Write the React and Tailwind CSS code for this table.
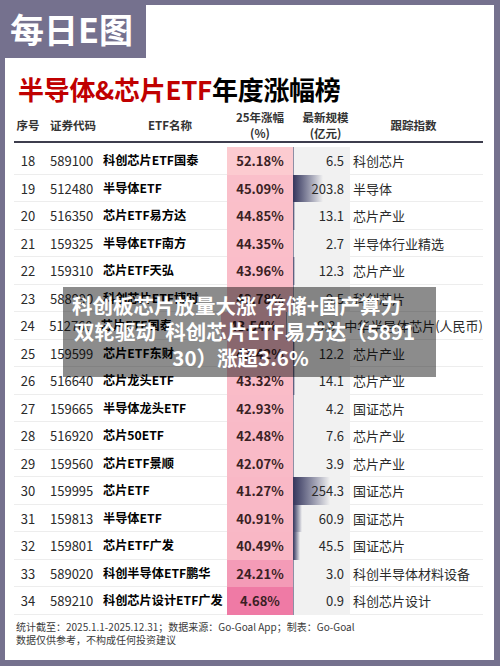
import React from "react";

const rows = [
  ["18", "589100", "科创芯片ETF国泰", 52.18, 6.5, "科创芯片"],
  ["19", "512480", "半导体ETF", 45.09, 203.8, "半导体"],
  ["20", "516350", "芯片ETF易方达", 44.85, 13.1, "芯片产业"],
  ["21", "159325", "半导体ETF南方", 44.35, 2.7, "半导体行业精选"],
  ["22", "159310", "芯片ETF天弘", 43.96, 12.3, "芯片产业"],
  ["23", "588990", "科创芯片ETF博时", 43.78, 9.5, "科创芯片"],
  ["24", "512760", "芯片ETF国泰", 43.54, 9.8, "中华半导体芯片(人民币)"],
  ["25", "159599", "芯片ETF东财", 43.42, 12.2, "芯片产业"],
  ["26", "516640", "芯片龙头ETF", 43.32, 14.1, "芯片产业"],
  ["27", "159665", "半导体龙头ETF", 42.93, 4.2, "国证芯片"],
  ["28", "516920", "芯片50ETF", 42.48, 7.6, "芯片产业"],
  ["29", "159560", "芯片ETF景顺", 42.07, 3.9, "芯片产业"],
  ["30", "159995", "芯片ETF", 41.27, 254.3, "国证芯片"],
  ["31", "159813", "半导体ETF", 40.91, 60.9, "国证芯片"],
  ["32", "159801", "芯片ETF广发", 40.49, 45.5, "国证芯片"],
  ["33", "589020", "科创半导体ETF鹏华", 24.21, 3.0, "科创半导体材料设备"],
  ["34", "589210", "科创芯片设计ETF广发", 4.68, 0.9, "科创芯片设计"],
];

// pink scale: lowest gain darkest
const pink = (v) => {
  const t = Math.max(0, Math.min(1, (v - 4.68) / (52.18 - 4.68)));
  const lo = [239, 122, 165];
  const hi = [252, 203, 208];
  const c = lo.map((x, i) => Math.round(x + (hi[i] - x) * t));
  return `rgb(${c[0]},${c[1]},${c[2]})`;
};

const Row = ({ r }) => {
  const [no, code, name, pct, size, index] = r;
  return (
    <div className="flex h-[27.5px] text-[13px] leading-[27.5px] text-[#2a2a2a]">
      <div className="w-[28px] text-center border-b border-[#ededed]">{no}</div>
      <div className="w-[58px] pl-[8px] border-b border-[#ededed]">{code}</div>
      <div className="w-[127px] pl-[3px] text-[12.2px] font-bold text-black border-b border-[#ededed] whitespace-nowrap">
        {name}
      </div>
      <div
        className="w-[66px] text-center font-bold text-[#3a1f24]"
        style={{ backgroundColor: pink(pct) }}
      >
        {pct.toFixed(2)}%
      </div>
      <div className="relative w-[57px] bg-[#f1f1f1] text-right pr-[6px]">
        <div
          className="absolute left-0 top-0 bottom-0 bg-linear-to-r from-[#36365c] to-[#f1f1f1]"
          style={{ width: Math.max(size * 0.145, 0.6) + "px" }}
        ></div>
        <span className="relative">{size.toFixed(1)}</span>
      </div>
      <div className="flex-1 pl-[3px] border-b border-[#ededed] whitespace-nowrap">{index}</div>
    </div>
  );
};

export default function App() {
  return (
    <div className="relative w-[500px] h-[666px] bg-[#75718e] pt-[5px] pl-[5px] pr-[6px] pb-[6px] font-['Noto_Sans_CJK_SC',sans-serif]">
      <div className="h-full bg-white flex flex-col pl-[9px] pr-[11px]">
        <div className="mt-[68px] h-[32px] leading-[32px] pl-[4px] text-[26px] font-bold tracking-[-0.3px] whitespace-nowrap">
          <span className="text-[#c00000]">半导体&amp;芯片ETF</span>
          <span className="text-black">年度涨幅榜</span>
        </div>

        <div className="flex h-[38px] pt-[4px] items-center text-[11.5px] font-bold text-[#333] border-b-2 border-[#3d3d4d] leading-[16px]">
          <div className="w-[28px] text-center">序号</div>
          <div className="w-[58px] pl-[8px]">证券代码</div>
          <div className="w-[127px] pl-[48px]">ETF名称</div>
          <div className="w-[66px] text-center">
            <div>25年涨幅</div>
            <div>(%)</div>
          </div>
          <div className="w-[57px] text-center pl-[8px]">
            <div>最新规模</div>
            <div>(亿元)</div>
          </div>
          <div className="flex-1 text-center pr-[6px]">跟踪指数</div>
        </div>

        <div className="mt-[4px] flex flex-col">
          {rows.map((r) => (
            <Row key={r[0]} r={r} />
          ))}
        </div>

        <div className="pt-[5px] pl-[2px] text-[10px] leading-[13.5px] text-[#3a3a3a] whitespace-nowrap">
          <div>统计截至：2025.1.1-2025.12.31；数据来源：Go-Goal App；制表：Go-Goal</div>
          <div>数据仅供参考，不构成任何投资建议</div>
        </div>
      </div>

      <div className="absolute left-0 top-0 w-[146px] h-[58px] bg-[#75718e] pl-[10px] text-white text-[34px] font-bold leading-[58px] whitespace-nowrap">
        每日E图
      </div>

      <div className="absolute left-[63px] top-[287px] w-[373px] h-[90px] bg-black/45 pt-[5px] text-center text-white text-[20.5px] font-bold leading-[26px] whitespace-nowrap">
        <div className="pr-[26px]">科创板芯片放量大涨&nbsp; 存储+国产算力</div>
        <div className="pr-[10px]">双轮驱动&nbsp; 科创芯片ETF易方达（5891</div>
        <div className="pr-[18px]">30）涨超3.6%</div>
      </div>
    </div>
  );
}
